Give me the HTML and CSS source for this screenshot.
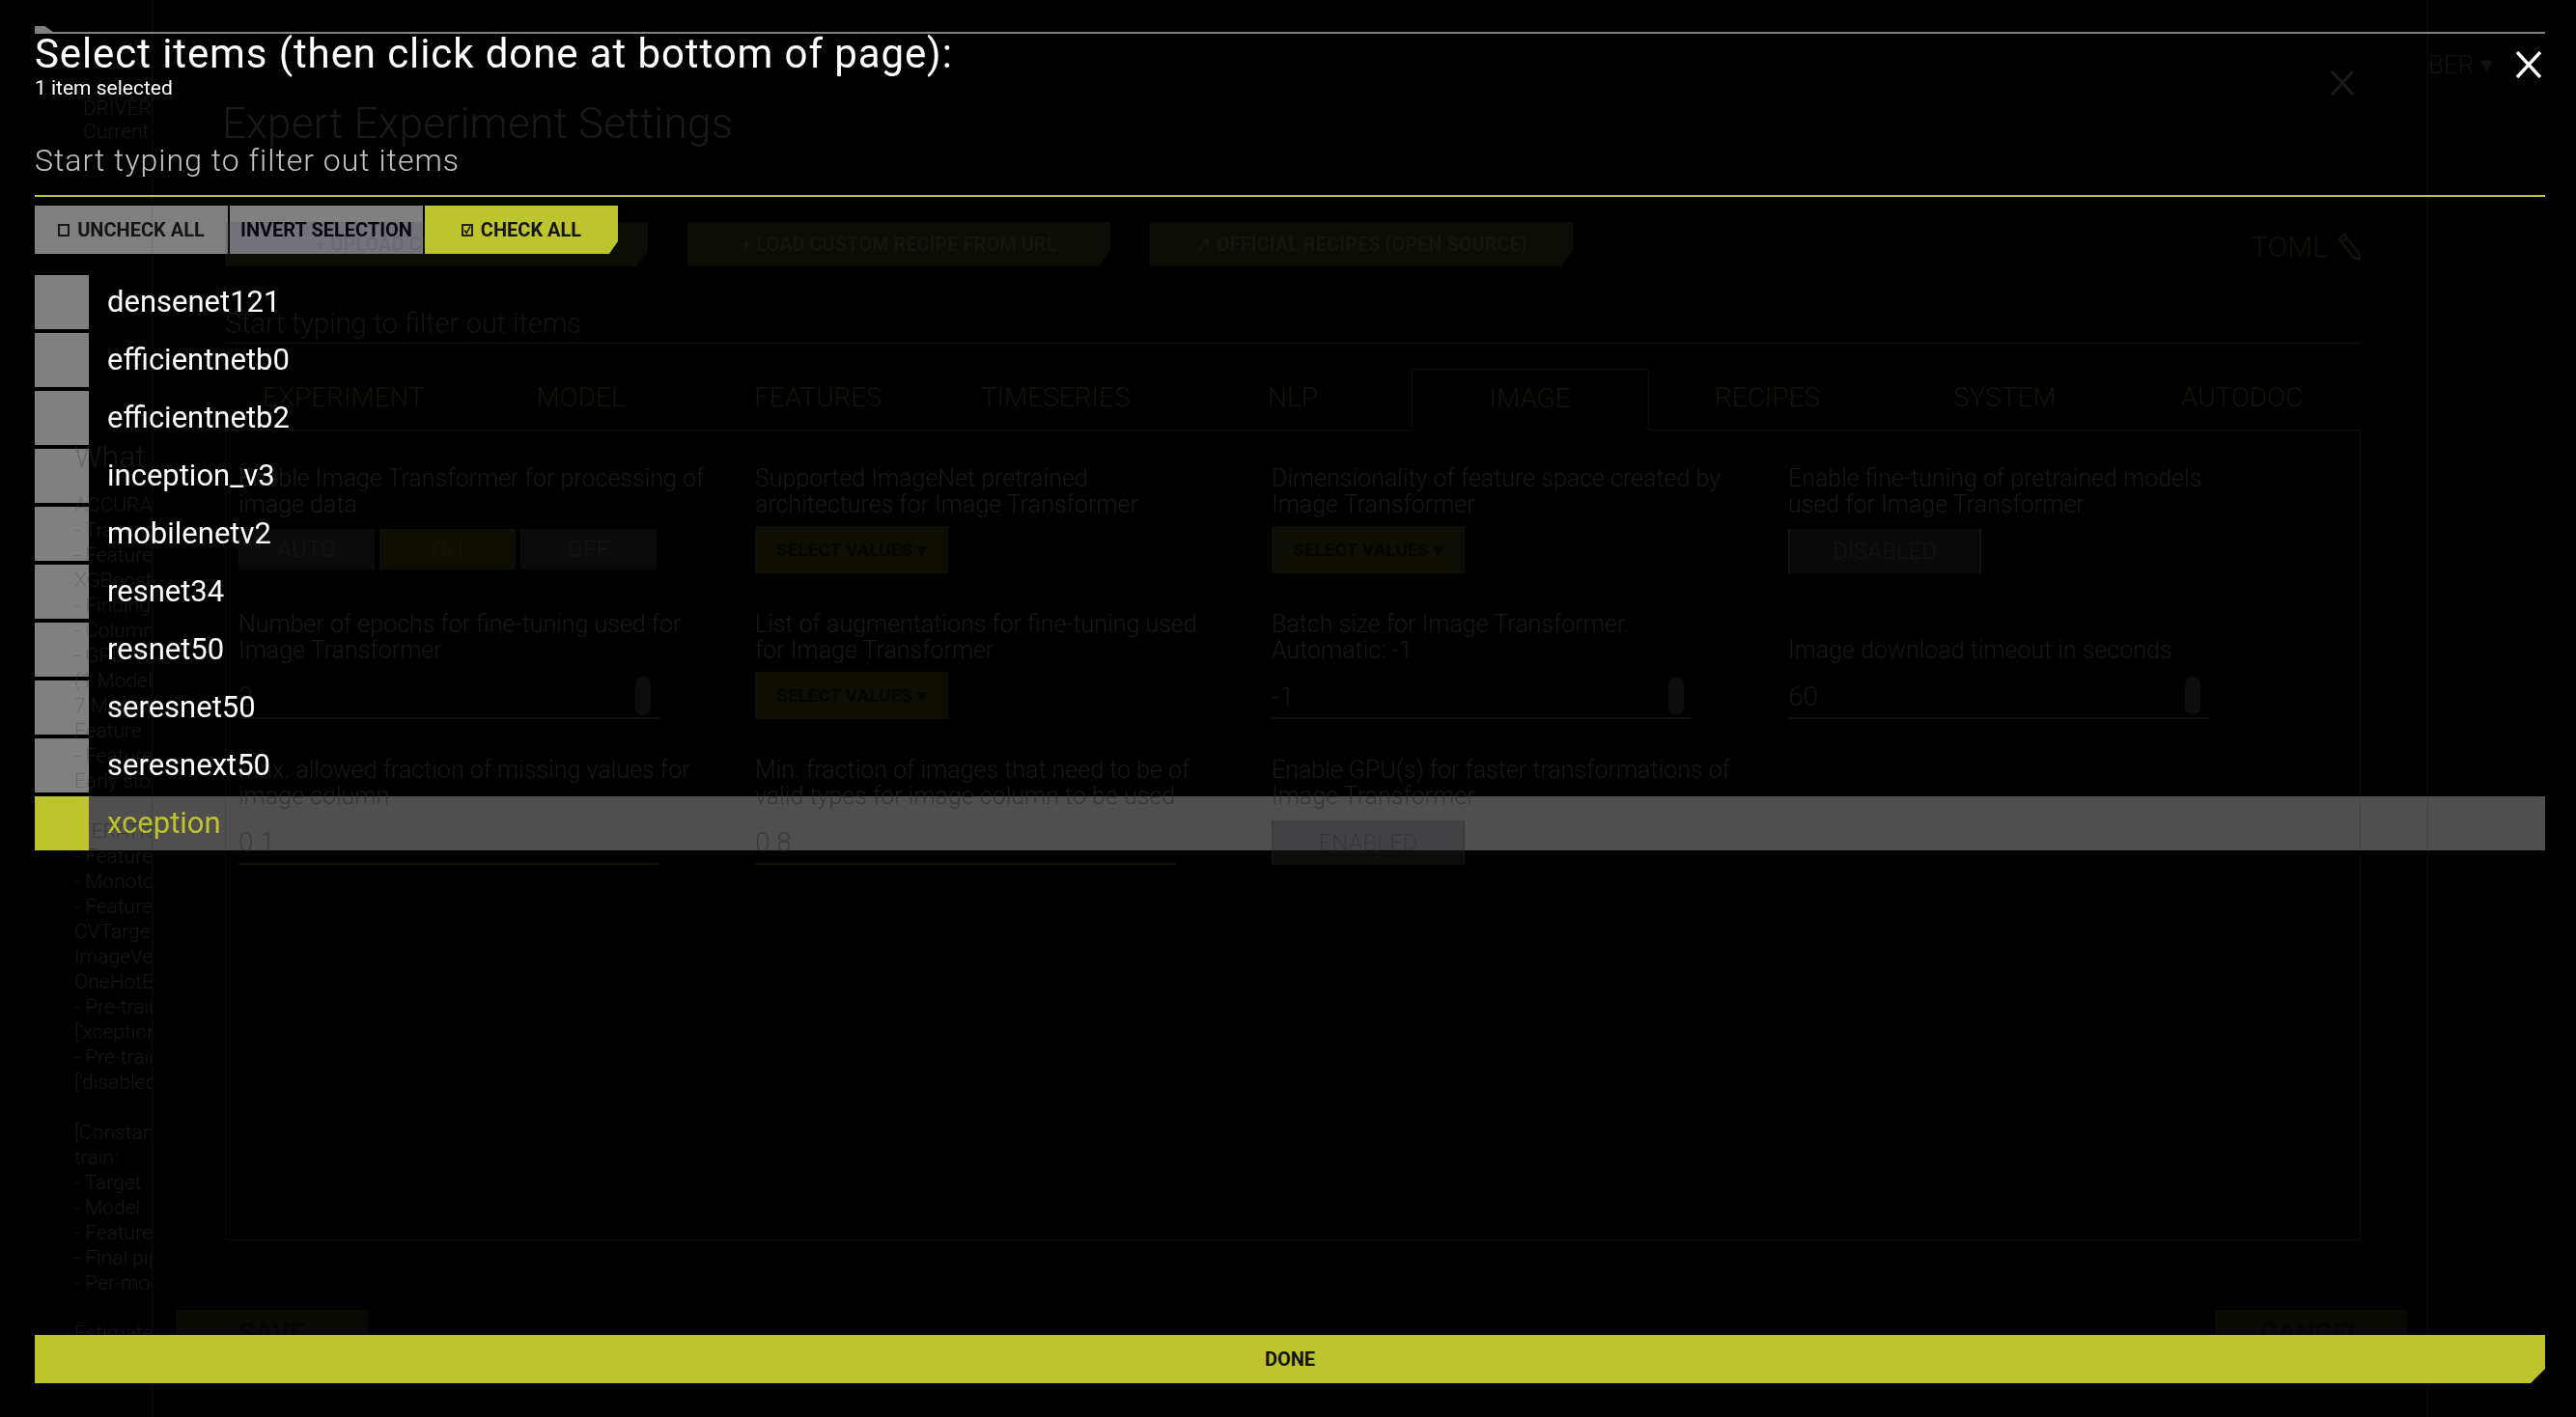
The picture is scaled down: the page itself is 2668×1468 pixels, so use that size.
FILE: index.html
```html
<!DOCTYPE html>
<html lang="en">
<head>
<meta charset="utf-8">
<title>Select items</title>
<link rel="stylesheet" href="styles.css">
</head>
<body>
<div class="page">
  <aside class="side">
    <div class="s-top">DRIVER</div>
    <div class="s-top">Current</div>
    <div class="s-what">What</div>
    <div class="s-lines">
      <div>ACCURACY</div><div>- Training data</div><div>- Feature</div><div>XGBoost</div>
      <div>- Finding</div><div>- Column</div><div>- GPU</div><div>(1 Model)</div>
      <div>7 Models</div><div>Feature</div><div>- Feature</div><div>Early stopping</div>
      <div>&nbsp;</div><div>ITERATIONS</div><div>- Feature</div><div>- Monotonicity</div>
      <div>- Feature</div><div>CVTargetEncode</div><div>ImageVectorizer</div><div>OneHotEncoding</div>
      <div>- Pre-trained</div><div>['xception']</div><div>- Pre-trained</div><div>['disabled']</div>
      <div>&nbsp;</div><div>[Constant]</div><div>train:</div><div>- Target</div>
      <div>- Model</div><div>- Feature</div><div>- Final pipeline</div><div>- Per-model</div>
      <div>&nbsp;</div><div>Estimated</div>
    </div>
  </aside>

  <div class="dialog">
    <div class="dlg-body">
      <div class="dlg-head">
        <div class="dlg-title">Expert Experiment Settings</div>
        <svg class="dlg-x" viewBox="0 0 28 28"><path d="M3 2 L25 26 M25 2 L3 26" stroke="#1a1a1a" stroke-width="3" fill="none"/></svg>
      </div>
      <div class="recipes">
        <div class="rbtn">+ UPLOAD CUSTOM RECIPE</div>
        <div class="rbtn">+ LOAD CUSTOM RECIPE FROM URL</div>
        <div class="rbtn">&#8599; OFFICIAL RECIPES (OPEN SOURCE)</div>
        <div class="toml">TOML
          <svg class="pencil" viewBox="0 0 26 30"><path d="M2 6 L8 1 L24 22 L25 29 L18 27 Z" fill="none" stroke="#131309" stroke-width="2.5"/><path d="M5 9 L11 4" stroke="#131309" stroke-width="2"/></svg>
        </div>
      </div>
      <div class="dlg-filter">Start typing to filter out items</div>
      <div class="tabs">
        <div class="tab">EXPERIMENT</div><div class="tab">MODEL</div><div class="tab">FEATURES</div>
        <div class="tab">TIMESERIES</div><div class="tab">NLP</div><div class="tab active">IMAGE</div>
        <div class="tab">RECIPES</div><div class="tab">SYSTEM</div><div class="tab">AUTODOC</div>
      </div>
      <div class="panel">
        <div class="grid">
          <div class="cell">
            <div class="lbl">Enable Image Transformer for processing of<br>image data</div>
            <div class="toggle"><span>AUTO</span><span class="on">ON</span><span>OFF</span></div>
          </div>
          <div class="cell">
            <div class="lbl">Supported ImageNet pretrained<br>architectures for Image Transformer</div>
            <div class="sel">SELECT VALUES &#9662;</div>
          </div>
          <div class="cell">
            <div class="lbl">Dimensionality of feature space created by<br>Image Transformer</div>
            <div class="sel">SELECT VALUES &#9662;</div>
          </div>
          <div class="cell">
            <div class="lbl">Enable fine-tuning of pretrained models<br>used for Image Transformer</div>
            <div class="pill">DISABLED</div>
          </div>

          <div class="cell">
            <div class="lbl">Number of epochs for fine-tuning used for<br>Image Transformer</div>
            <div class="num"><span>2</span><i class="spin"></i></div>
          </div>
          <div class="cell">
            <div class="lbl">List of augmentations for fine-tuning used<br>for Image Transformer</div>
            <div class="sel">SELECT VALUES &#9662;</div>
          </div>
          <div class="cell">
            <div class="lbl">Batch size for Image Transformer.<br>Automatic: -1</div>
            <div class="num"><span>-1</span><i class="spin"></i></div>
          </div>
          <div class="cell">
            <div class="lbl">Image download timeout in seconds</div>
            <div class="num"><span>60</span><i class="spin"></i></div>
          </div>

          <div class="cell">
            <div class="lbl">Max. allowed fraction of missing values for<br>image column</div>
            <div class="num"><span>0.1</span></div>
          </div>
          <div class="cell">
            <div class="lbl">Min. fraction of images that need to be of<br>valid types for image column to be used</div>
            <div class="num"><span>0.8</span></div>
          </div>
          <div class="cell">
            <div class="lbl">Enable GPU(s) for faster transformations of<br>Image Transformer</div>
            <div class="pill en">ENABLED</div>
          </div>
        </div>
      </div>
    </div>
    <div class="dlg-foot">
      <div class="fbtn">SAVE</div>
      <div class="fbtn">CANCEL</div>
    </div>
  </div>

  <div class="rcol">BER &#9662;</div>
</div>

<div class="overlay">
  <div class="m-top"></div>
  <div class="m-head">
    <div class="m-titles">
      <div class="m-title">Select items (then click done at bottom of page):</div>
      <div class="m-count">1 item selected</div>
    </div>
    <svg class="m-close" viewBox="0 0 28 28"><path d="M2 1 L26 27 M26 1 L2 27" stroke="#ffffff" stroke-width="3.4" fill="none"/></svg>
  </div>
  <div class="m-filter">Start typing to filter out items</div>
  <div class="m-actions">
    <div class="btn grey">
      <svg class="ico" viewBox="0 0 12 13"><rect x="1" y="1" width="10" height="11" fill="none" stroke="#141414" stroke-width="2"/></svg>
      UNCHECK ALL
    </div>
    <div class="btn grey">INVERT SELECTION</div>
    <div class="btn on">
      <svg class="ico" viewBox="0 0 12 13"><rect x="1" y="1" width="10" height="11" fill="none" stroke="#141414" stroke-width="1.8"/><path d="M3 6.5 L5.3 9.5 L9 2.5" fill="none" stroke="#141414" stroke-width="1.6"/></svg>
      CHECK ALL
    </div>
  </div>
  <div class="m-list">
    <div class="item"><span class="box"></span><span class="name">densenet121</span></div>
    <div class="item"><span class="box"></span><span class="name">efficientnetb0</span></div>
    <div class="item"><span class="box"></span><span class="name">efficientnetb2</span></div>
    <div class="item"><span class="box"></span><span class="name">inception_v3</span></div>
    <div class="item"><span class="box"></span><span class="name">mobilenetv2</span></div>
    <div class="item"><span class="box"></span><span class="name">resnet34</span></div>
    <div class="item"><span class="box"></span><span class="name">resnet50</span></div>
    <div class="item"><span class="box"></span><span class="name">seresnet50</span></div>
    <div class="item"><span class="box"></span><span class="name">seresnext50</span></div>
    <div class="item selected"><span class="box"></span><span class="name">xception</span></div>
  </div>
  <div class="m-done">DONE</div>
</div>
</body>
</html>
```
FILE: styles.css
```css
* { box-sizing: border-box; }
html, body { margin: 0; padding: 0; }
body {
  width: 2668px;
  height: 1468px;
  overflow: hidden;
  position: relative;
  background: #000;
  color: #fff;
  font-family: Roboto, "Liberation Sans", sans-serif;
}

/* ---------- dimmed page behind the modal ---------- */
.page {
  display: flex;
  height: 1468px;
  color: #1a1a1a;
  font-weight: 300;
}
.side {
  flex: none;
  width: 158px;
  border-right: 1px solid #0c0c0c;
  padding: 100px 0 0 77px;
  overflow: hidden;
  white-space: nowrap;
  font-size: 21px;
  line-height: 24px;
  color: #161616;
}
.s-top { padding-left: 9px; }
.s-what { margin-top: 306px; font-size: 32px; line-height: 38px; }
.s-lines { margin-top: 18px; line-height: 26px; }

.dialog {
  flex: none;
  width: 2311px;
  margin-left: 24px;
  display: flex;
  flex-direction: column;
}
.dlg-body { padding: 0 48px 0 51px; }
.dlg-head {
  display: flex;
  justify-content: space-between;
  align-items: flex-start;
  padding-top: 72px;
}
.dlg-title {
  margin: 28px 0 0 -3px;
  font-size: 44px;
  line-height: 56px;
  letter-spacing: 0.3px;
  color: #1a1a1a;
}
.dlg-x { width: 28px; height: 28px; margin-right: 5px; }

.recipes {
  margin-top: 74px;
  display: flex;
  align-items: flex-start;
  gap: 41px;
}
.rbtn {
  width: 438px;
  height: 46px;
  background: #0d0d07;
  color: #16160c;
  font-weight: 700;
  font-size: 20px;
  display: flex;
  align-items: center;
  justify-content: center;
  clip-path: polygon(0 0, 100% 0, 100% 30px, calc(100% - 12px) 100%, 0 100%);
}
.toml {
  margin-left: auto;
  margin-top: 8px;
  display: flex;
  align-items: center;
  gap: 10px;
  font-size: 30px;
  color: #121209;
}
.pencil { width: 24px; height: 28px; }

.dlg-filter {
  margin-top: 40px;
  height: 40px;
  font-size: 29px;
  line-height: 38px;
  color: #131313;
  border-bottom: 1px solid #0f0f0f;
}
.tabs {
  margin-top: 26px;
  height: 64px;
  display: grid;
  grid-template-columns: repeat(9, 1fr);
  border-bottom: 1px solid #0e0e0e;
}
.tab {
  text-align: center;
  font-size: 28px;
  line-height: 60px;
  color: #14140a;
}
.tab.active {
  border: 1px solid #0e0e0e;
  border-bottom: none;
  background: #000;
  margin-bottom: -1px;
}
.panel {
  height: 839px;
  border: 1px solid #0b0b0b;
  border-top: none;
  padding: 36px 0 0 13px;
}
.grid {
  display: grid;
  grid-template-columns: repeat(4, 535px);
  row-gap: 39px;
}
.cell { display: flex; flex-direction: column; }
.lbl {
  min-height: 54px;
  display: flex;
  flex-direction: column;
  justify-content: flex-end;
  font-size: 25px;
  line-height: 27px;
  color: #181818;
  white-space: nowrap;
}
.toggle {
  margin-top: 12px;
  height: 42px;
  width: 433px;
  display: flex;
  gap: 5px;
}
.toggle span {
  flex: 1;
  background: #0b0b0b;
  color: #151515;
  font-size: 24px;
  display: flex;
  align-items: center;
  justify-content: center;
}
.toggle span.on { background: #0e0e05; color: #14140a; }
.sel {
  margin-top: 9px;
  width: 200px;
  height: 49px;
  background: #0e0e05;
  color: #050503;
  font-weight: 700;
  font-size: 19px;
  display: flex;
  align-items: center;
  justify-content: center;
}
.pill {
  margin-top: 12px;
  width: 200px;
  height: 46px;
  background: #090909;
  border-left: 2px solid #131313;
  border-right: 2px solid #131313;
  color: #141414;
  font-size: 24px;
  display: flex;
  align-items: center;
  justify-content: center;
}
.pill.en { background: #0d0d0b; color: #1a1a17; }
.num {
  margin-top: 12px;
  width: 436px;
  height: 46px;
  border-bottom: 2px solid #111108;
  display: flex;
  align-items: center;
  justify-content: space-between;
  padding-right: 9px;
  font-size: 28px;
  color: #15150f;
}
.spin {
  width: 16px;
  height: 40px;
  border-radius: 8px;
  background: #0d0d0d;
}
.dlg-foot {
  margin-top: 72px;
  display: flex;
  justify-content: space-between;
}
.fbtn {
  width: 199px;
  height: 47px;
  background: #0b0b05;
  color: #050505;
  font-weight: 700;
  font-size: 28px;
  display: flex;
  align-items: center;
  justify-content: center;
}
.rcol {
  flex: 1;
  margin-left: 21px;
  border-left: 1px solid #0c0c0c;
  padding-top: 52px;
  font-size: 26px;
  color: #111111;
  white-space: nowrap;
  overflow: hidden;
}

/* ---------- the modal ---------- */
:root { --y: #bec42d; }
.overlay {
  position: absolute;
  inset: 0;
  display: flex;
  flex-direction: column;
  padding: 0 32px 0 36px;
}
.m-top {
  flex: none;
  margin-top: 33px;
  height: 2px;
  background: #808080;
  position: relative;
}
.m-top::before {
  content: "";
  position: absolute;
  left: 0;
  top: -6px;
  width: 19px;
  height: 6px;
  background: #808080;
  clip-path: polygon(0 0, 55% 0, 100% 100%, 0 100%);
}
.m-head {
  display: flex;
  justify-content: space-between;
  align-items: flex-start;
}
.m-title {
  margin-top: 2px;
  font-size: 42px;
  line-height: 38px;
  letter-spacing: 0.9px;
  white-space: nowrap;
}
.m-count {
  margin-top: 5px;
  font-size: 21px;
  line-height: 22px;
}
.m-close { width: 28px; height: 28px; margin: 18px 3px 0 0; }
.m-filter {
  margin-top: 44px;
  padding-bottom: 16px;
  border-bottom: 2px solid var(--y);
  font-size: 32px;
  line-height: 40px;
  letter-spacing: 1px;
  font-weight: 300;
  color: #c4c4c4;
}
.m-actions {
  margin-top: 9px;
  display: flex;
  gap: 2px;
}
.btn {
  width: 200px;
  height: 50px;
  background: #808080;
  color: #141414;
  font-weight: 700;
  font-size: 20px;
  display: flex;
  align-items: center;
  justify-content: center;
  gap: 8px;
}
.btn.grey { mix-blend-mode: difference; }
.btn.on {
  background: var(--y);
  clip-path: polygon(0 0, 100% 0, 100% 37px, 191px 100%, 0 100%);
}
.ico { width: 12px; height: 13px; }
.m-list {
  margin-top: 22px;
  display: flex;
  flex-direction: column;
  gap: 4px;
}
.item {
  display: flex;
  height: 56px;
}
.box {
  flex: none;
  width: 56px;
  height: 56px;
  background: #808080;
  mix-blend-mode: difference;
}
.name {
  padding-left: 19px;
  font-size: 31px;
  line-height: 56px;
}
.item.selected .box { background: var(--y); mix-blend-mode: normal; }
.item.selected .name {
  flex: 1;
  color: var(--y);
  background: #4f4f4f;
  mix-blend-mode: difference;
}
.m-done {
  margin-top: auto;
  margin-bottom: 35px;
  flex: none;
  height: 50px;
  background: var(--y);
  color: #141414;
  font-weight: 700;
  font-size: 20px;
  display: flex;
  align-items: center;
  justify-content: center;
  clip-path: polygon(0 0, 100% 0, 100% 35px, calc(100% - 15px) 100%, 0 100%);
}
```
